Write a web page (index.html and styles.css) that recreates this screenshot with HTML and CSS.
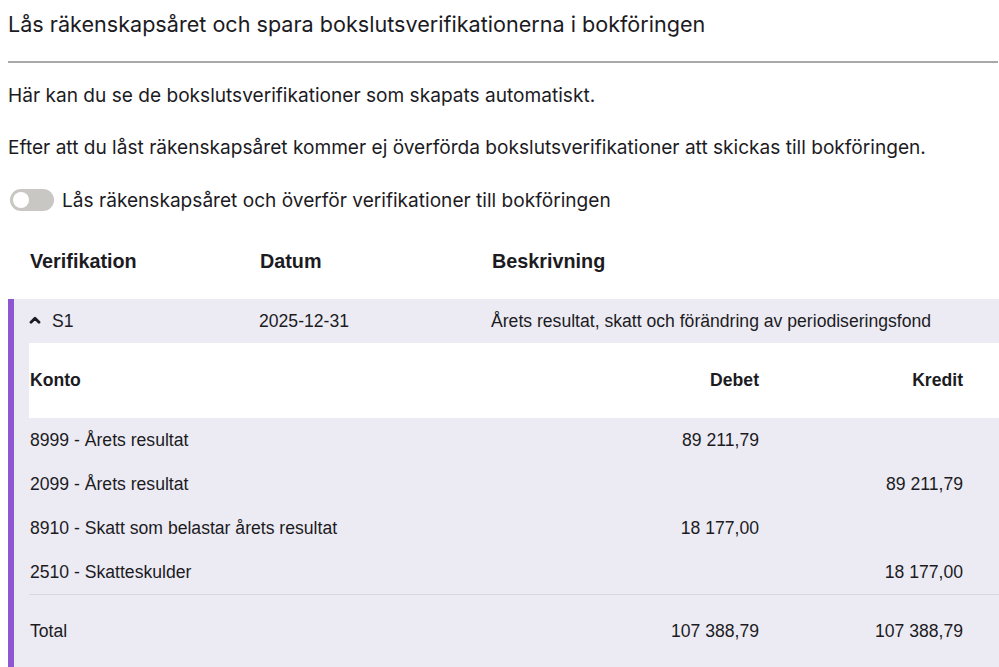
FILE: index.html
```html
<!DOCTYPE html>
<html lang="sv">
<head>
<meta charset="utf-8">
<title>Bokslut</title>
<link rel="stylesheet" href="styles.css">
</head>
<body>
<div class="page">
  <h1 class="title">Lås räkenskapsåret och spara bokslutsverifikationerna i bokföringen</h1>
  <div class="divider"></div>
  <p class="text">Här kan du se de bokslutsverifikationer som skapats automatiskt.</p>
  <p class="text">Efter att du låst räkenskapsåret kommer ej överförda bokslutsverifikationer att skickas till bokföringen.</p>
  <label class="toggle-row">
    <span class="toggle"><span class="knob"></span></span>
    <span class="toggle-label">Lås räkenskapsåret och överför verifikationer till bokföringen</span>
  </label>

  <div class="table">
    <div class="thead">
      <div class="c1">Verifikation</div>
      <div class="c2">Datum</div>
      <div class="c3">Beskrivning</div>
    </div>
    <div class="verif">
      <div class="verif-head">
        <div class="c1">
          <svg class="chev" width="12" height="9" viewBox="0 0 12 9"><polyline points="2,7.2 6,3.2 10,7.2" fill="none" stroke="#1c1b1f" stroke-width="2.8" stroke-linecap="round" stroke-linejoin="round"/></svg>
          <span>S1</span>
        </div>
        <div class="c2">2025-12-31</div>
        <div class="c3">Årets resultat, skatt och förändring av periodiseringsfond</div>
      </div>
      <div class="verif-body">
        <div class="lines-head grid">
          <div>Konto</div>
          <div class="num">Debet</div>
          <div class="num">Kredit</div>
        </div>
        <div class="line grid">
          <div>8999 - Årets resultat</div>
          <div class="num">89 211,79</div>
          <div class="num"></div>
        </div>
        <div class="line grid">
          <div>2099 - Årets resultat</div>
          <div class="num"></div>
          <div class="num">89 211,79</div>
        </div>
        <div class="line grid">
          <div>8910 - Skatt som belastar årets resultat</div>
          <div class="num">18 177,00</div>
          <div class="num"></div>
        </div>
        <div class="line grid">
          <div>2510 - Skatteskulder</div>
          <div class="num"></div>
          <div class="num">18 177,00</div>
        </div>
        <div class="total grid">
          <div>Total</div>
          <div class="num">107 388,79</div>
          <div class="num">107 388,79</div>
        </div>
      </div>
    </div>
  </div>
</div>
</body>
</html>
```

FILE: styles.css
```css
* { box-sizing: border-box; }
html, body { margin: 0; padding: 0; background: #fff; }
body {
  font-family: Inter, "Noto Sans", "Liberation Sans", sans-serif;
  color: #1c1b1f;
  overflow: hidden;
}
.page { padding: 10px 0 0 8px; }
.title {
  margin: 0;
  font-size: 21.6px;
  font-weight: 400;
  line-height: 28px;
}
.divider {
  height: 2px;
  background: #a9a9a9;
  margin: 23px 1px 0 0;
}
.text {
  margin: 19px 0 0 0;
  font-size: 19.1px;
  line-height: 26px;
}
.text + .text { margin-top: 26px; }
.toggle-row {
  display: flex;
  align-items: center;
  gap: 8px;
  margin-top: 27px;
  font-size: 19.1px;
  line-height: 26px;
}
.toggle {
  width: 44px;
  height: 22px;
  border-radius: 11px;
  background: #c9c7c3;
  margin-left: 2px;
  display: flex;
  align-items: center;
  padding-left: 3px;
}
.knob {
  width: 16px;
  height: 16px;
  border-radius: 50%;
  background: #fff;
}
.table {
  margin-top: 10px;
  font-family: "Liberation Sans", Arial, sans-serif;
  font-size: 17.6px;
}
.thead, .verif-head {
  display: flex;
  align-items: center;
  padding-left: 22px;
}
.verif-head { padding-left: 15px; }
.c1 { width: 230px; display: flex; align-items: center; }
.c2 { width: 232px; }
.c3 { flex: 1; }
.thead {
  height: 76px;
  font-weight: 700;
  font-size: 19.8px;
}
.verif {
  border-left: 6px solid #8e57d2;
  background: #ecebf3;
}
.verif-head { height: 44px; }
.chev { margin: 0 11px 3px 0; }
.verif-body { margin-left: 15px; }
.grid {
  display: grid;
  grid-template-columns: 1fr 204px 204px;
  padding: 0 36px 0 1px;
  align-items: center;
}
.num { text-align: right; }
.lines-head {
  background: #fff;
  height: 75px;
  font-weight: 700;
}
.line { height: 44px; }
.total {
  height: 74px;
  border-top: 1px solid #d9d8de;
}
```
